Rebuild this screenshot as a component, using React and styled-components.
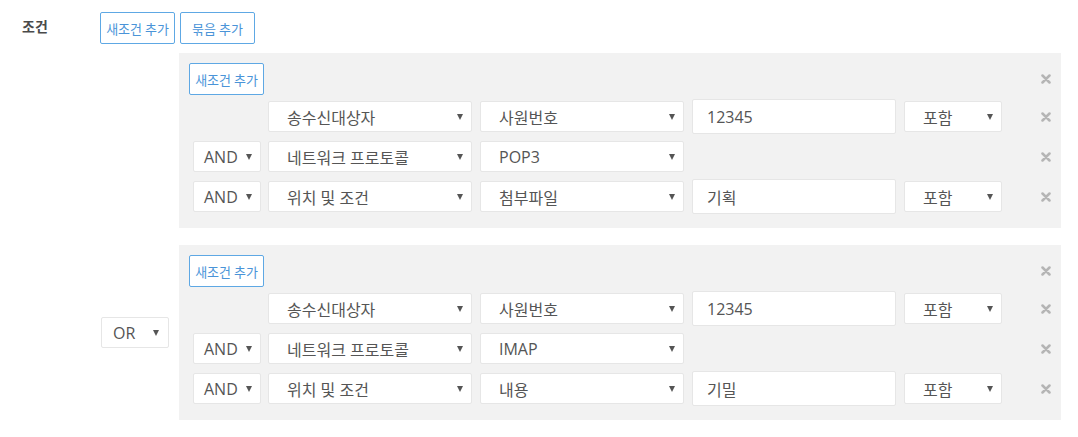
import React from 'react'
import styled, { createGlobalStyle } from 'styled-components'

const GlobalStyle = createGlobalStyle`
    body {
        margin: 0;
        background: #ffffff;
        font-family: "Open Sans", "Noto Sans CJK KR", sans-serif;
        color: #555555;
    }
`

const Page = styled.div`
    display: flex;
    padding: 12px 0 0 22px;
`

const Label = styled.div`
    width: 78px;
    flex-shrink: 0;
    font-family: "Noto Sans CJK KR", sans-serif;
    font-size: 14px;
    font-weight: 700;
    color: #4a4a4a;
    line-height: 20px;
    padding-top: 4px;
`

const Content = styled.div`
    display: flex;
    flex-direction: column;
`

const ButtonBar = styled.div`
    display: flex;
    gap: 5px;
`

const BlueButton = styled.button`
    width: 75px;
    height: 32px;
    padding: 0;
    border: 1px solid #5ea8e4;
    border-radius: 2px;
    background: #ffffff;
    color: #4a94d8;
    font-family: "Noto Sans CJK KR", sans-serif;
    font-size: 13px;
    cursor: pointer;
`

const Group = styled.div`
    display: flex;
    align-items: center;
    margin-top: ${p => p.$first ? '9px' : '17px'};
`

const GroupSide = styled.div`
    width: 79px;
    flex-shrink: 0;
    display: flex;
    align-items: center;
`

const Panel = styled.div`
    width: 882px;
    box-sizing: border-box;
    background: #f2f2f2;
    padding: 10px 10px 14px 10px;
    display: flex;
    flex-direction: column;
    gap: 5px;
`

const PanelHead = styled.div`
    display: flex;
    align-items: center;
    justify-content: space-between;
    height: 32px;
    margin-bottom: -1px;
`

const Row = styled.div`
    display: flex;
    align-items: center;
    height: 35px;
`

const Connector = styled.div`
    width: 79px;
    flex-shrink: 0;
    display: flex;
    padding-left: 4px;
    box-sizing: border-box;
`

const Fields = styled.div`
    display: flex;
    align-items: center;
    gap: 8px;
`

const SelectBox = styled.div`
    width: ${p => p.$w}px;
    height: 31px;
    box-sizing: border-box;
    background: #ffffff;
    border: 1px solid #e6e6e6;
    border-radius: 2px;
    display: flex;
    align-items: center;
    justify-content: space-between;
    padding: 0 ${p => p.$right || 8}px 0 ${p => p.$pad}px;
    font-size: 16px;
    color: #555555;
    white-space: nowrap;
    margin-left: ${p => p.$ml || 0}px;
`

const Caret = styled.span`
    width: 0;
    height: 0;
    border-left: 3.5px solid transparent;
    border-right: 3.5px solid transparent;
    border-top: 6px solid #555555;
`

const TextInput = styled.div`
    width: 204px;
    height: 35px;
    box-sizing: border-box;
    background: #ffffff;
    border: 1px solid #e6e6e6;
    border-radius: 2px;
    display: flex;
    align-items: center;
    padding-left: 14px;
    font-size: 16px;
    color: #555555;
`

const Remove = styled.div`
    flex: 1;
    display: flex;
    justify-content: flex-end;
    padding-right: 0;
`

const Select = ({ value, w, pad = 18, right, ml }) => (
    <SelectBox $w={w} $pad={pad} $right={right} $ml={ml}>
        <span>{value}</span>
        <Caret />
    </SelectBox>
)

const XIcon = () => (
    <svg width="10" height="10" viewBox="0 0 10 10">
        <path d="M1.5 1.5 L8.5 8.5 M8.5 1.5 L1.5 8.5" stroke="#b5b5b5" strokeWidth="2.5" strokeLinecap="round" />
    </svg>
)

const groups = [
    {
        join: null,
        rows: [
            { conn: null, a: '송수신대상자', b: '사원번호', text: '12345', op: '포함' },
            { conn: 'AND', a: '네트워크 프로토콜', b: 'POP3' },
            { conn: 'AND', a: '위치 및 조건', b: '첨부파일', text: '기획', op: '포함' }
        ]
    },
    {
        join: 'OR',
        rows: [
            { conn: null, a: '송수신대상자', b: '사원번호', text: '12345', op: '포함' },
            { conn: 'AND', a: '네트워크 프로토콜', b: 'IMAP' },
            { conn: 'AND', a: '위치 및 조건', b: '내용', text: '기밀', op: '포함' }
        ]
    }
]

export default function App() {
    return (
        <>
            <GlobalStyle />
            <Page>
                <Label>조건</Label>
                <Content>
                    <ButtonBar>
                        <BlueButton>새조건 추가</BlueButton>
                        <BlueButton>묶음 추가</BlueButton>
                    </ButtonBar>
                    {groups.map((g, gi) => (
                        <Group key={gi} $first={gi === 0}>
                            <GroupSide>
                                {g.join && <Select value={g.join} w={68} pad={11} right={9} ml={1} />}
                            </GroupSide>
                            <Panel>
                                <PanelHead>
                                    <BlueButton>새조건 추가</BlueButton>
                                    <Remove><XIcon /></Remove>
                                </PanelHead>
                                {g.rows.map((r, ri) => (
                                    <Row key={ri}>
                                        <Connector>
                                            {r.conn && <Select value={r.conn} w={68} pad={10} right={8} />}
                                        </Connector>
                                        <Fields>
                                            <Select value={r.a} w={204} />
                                            <Select value={r.b} w={204} />
                                            {r.text && <TextInput>{r.text}</TextInput>}
                                            {r.op && <Select value={r.op} w={98} />}
                                        </Fields>
                                        <Remove><XIcon /></Remove>
                                    </Row>
                                ))}
                            </Panel>
                        </Group>
                    ))}
                </Content>
            </Page>
        </>
    )
}
